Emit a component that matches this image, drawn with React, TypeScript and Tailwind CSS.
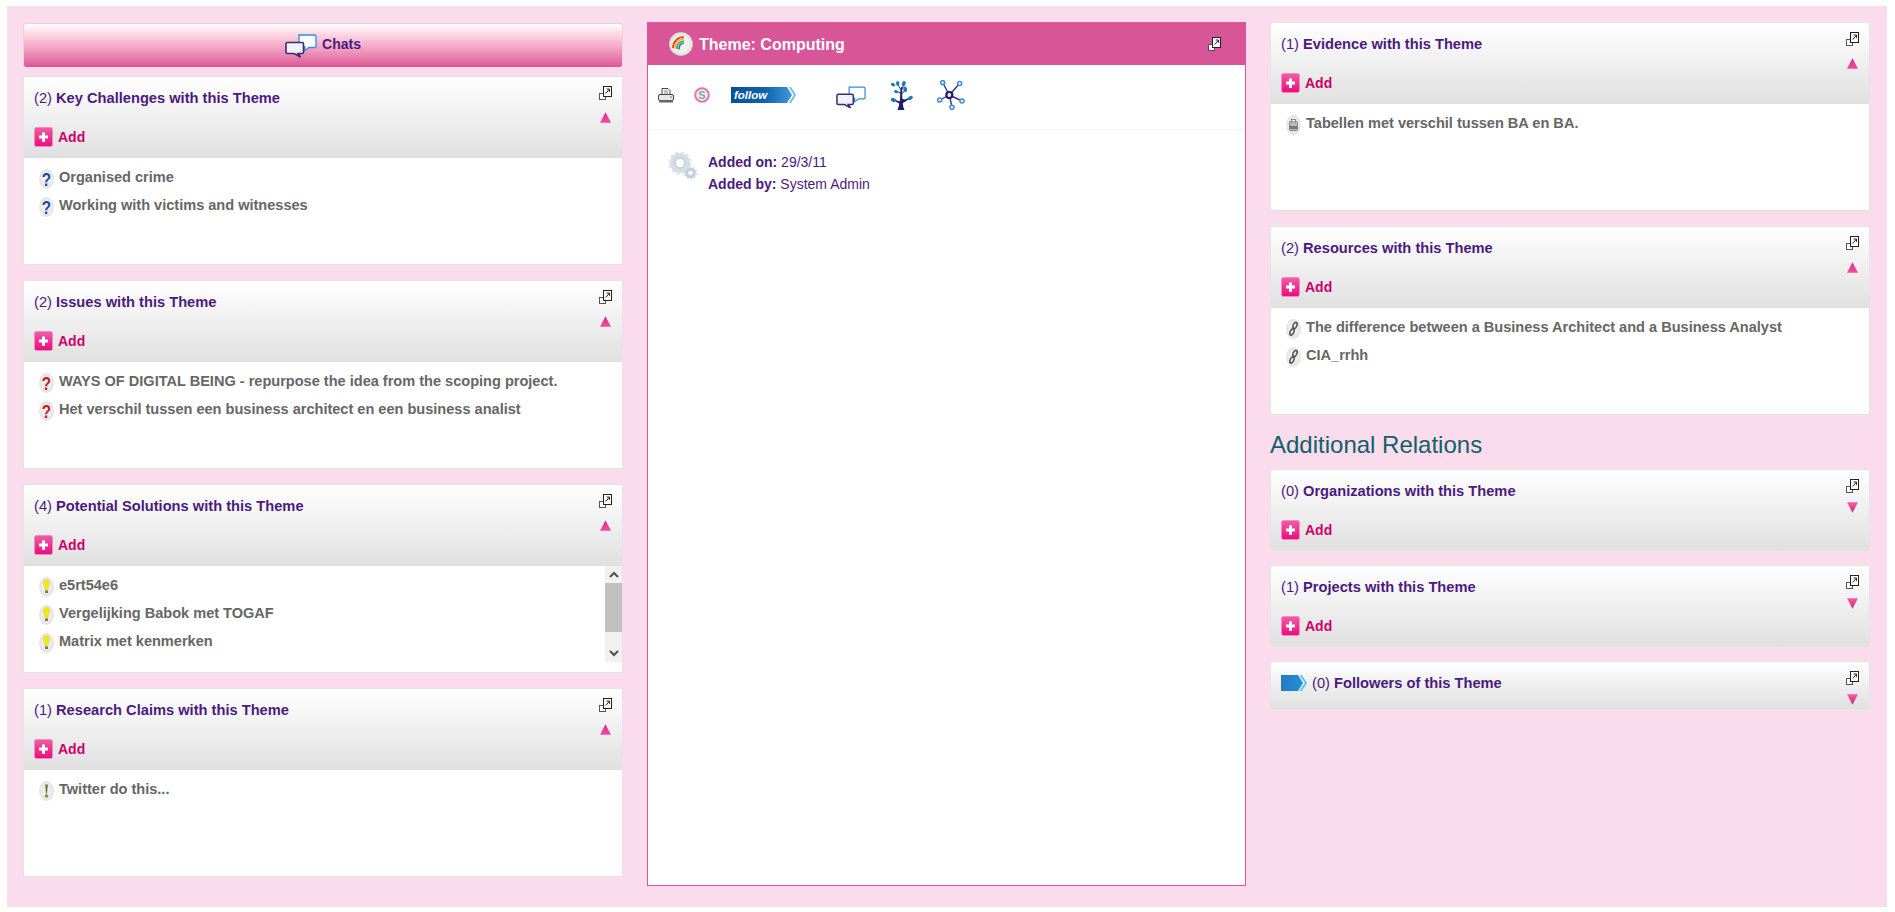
import React from "react";

const Expand = () => (
  <svg width="13" height="14" viewBox="0 0 13 14" className="block">
    <rect x="0.5" y="7.5" width="6" height="6" fill="#fff" stroke="#555" />
    <rect x="4.5" y="0.5" width="8" height="10" fill="#fff" stroke="#222" />
    <path d="M6.8 7.5 L10.2 3.4 M7.6 3 H10.5 V5.8" fill="none" stroke="#222" strokeWidth="1" />
  </svg>
);

const Tri = ({ down }: { down?: boolean }) => (
  <svg width="11" height="11" viewBox="0 0 11 11" className="block">
    <defs>
      <linearGradient id={down ? "td" : "tu"} x1="0" y1="0" x2="0" y2="1">
        <stop offset="0" stopColor={down ? "#f4609f" : "#d9288a"} />
        <stop offset="1" stopColor={down ? "#d81e85" : "#ef4f9c"} />
      </linearGradient>
    </defs>
    <path d={down ? "M0 0.3 H11 L5.5 10.8 Z" : "M5.5 0.2 L11 10.7 H0 Z"} fill={`url(#${down ? "td" : "tu"})`} />
  </svg>
);

const AddBtn = () => (
  <div className="flex items-center h-5 gap-[5px]">
    <svg width="19" height="20" viewBox="0 0 19 20" className="block shrink-0">
      <defs>
        <linearGradient id="addg" x1="0" y1="0" x2="0" y2="1">
          <stop offset="0" stopColor="#ee5fa6" />
          <stop offset="1" stopColor="#ec0a80" />
        </linearGradient>
      </defs>
      <rect x="0.5" y="0.5" width="18" height="19" rx="2" fill="url(#addg)" stroke="#f08cc0" />
      <path d="M9.5 5.5 V15 M5 10 H14" stroke="#fff" strokeWidth="3" />
    </svg>
    <span className="text-[#cc0066] font-bold text-[14px] leading-none">Add</span>
  </div>
);

const Oval = ({ children }: { children?: React.ReactNode }) => (
  <svg width="15" height="20" viewBox="0 0 15 20" className="block shrink-0">
    <defs>
      <radialGradient id="ov" cx="0.5" cy="0.5" r="0.6">
        <stop offset="0" stopColor="#f4f4f4" />
        <stop offset="0.7" stopColor="#e8e8e8" />
        <stop offset="1" stopColor="#d2d2d2" />
      </radialGradient>
    </defs>
    <ellipse cx="7.5" cy="10" rx="7.3" ry="9.9" fill="url(#ov)" />
    {children}
  </svg>
);

const Mark = ({ kind }: { kind: string }) => {
  if (kind === "q" || kind === "i")
    return (
      <Oval>
        <text transform="translate(7.5 16.8) scale(0.95 1.2)" textAnchor="middle" fontFamily="'Liberation Sans',sans-serif" fontWeight="700" fontSize="16" fill={kind === "q" ? "#1a4a9c" : "#c8181f"}>?</text>
      </Oval>
    );
  if (kind === "s")
    return (
      <Oval>
        <path d="M7.5 2.5 C10.5 2.5 11 5.5 10.3 7.5 C9.8 9 9 10 9 13 H6 C6 10 5.2 9 4.7 7.5 C4 5.5 4.5 2.5 7.5 2.5 Z" fill="#f3e81e" stroke="#d8c810" strokeWidth="0.4" />
        <rect x="6" y="13.5" width="3" height="2.5" fill="#777" />
      </Oval>
    );
  if (kind === "c")
    return (
      <Oval>
        <path d="M6.2 3.5 H8.8 L8 12.5 H7 Z" fill="#5f6f2a" />
        <circle cx="7.5" cy="15" r="1.8" fill="#7d9a3a" />
      </Oval>
    );
  if (kind === "e")
    return (
      <Oval>
        <rect x="3.5" y="6.5" width="8" height="9" rx="1" fill="#bdbdbd" stroke="#666" strokeWidth="0.7" />
        <rect x="5.5" y="4.5" width="4" height="2.5" fill="#eee" stroke="#666" strokeWidth="0.7" />
        <rect x="3.5" y="11" width="8" height="3" fill="#777" />
      </Oval>
    );
  return (
    <Oval>
      <g fill="none" stroke="#555" strokeWidth="1.6">
        <ellipse cx="9" cy="6.5" rx="1.8" ry="3.2" transform="rotate(25 9 6.5)" />
        <ellipse cx="6" cy="13" rx="1.8" ry="3.2" transform="rotate(25 6 13)" />
      </g>
    </Oval>
  );
};

const ChatIcon = ({ w = 32, h = 24 }: { w?: number; h?: number }) => (
  <svg width={w} height={h} viewBox="0 0 32 24" className="block">
    <path d="M14 1 H29.5 Q31 1 31 2.5 V12 Q31 13.5 29.5 13.5 H24 L19 17 L20 13 H14 Z" fill="#fff" stroke="#2f8ed8" strokeWidth="1.3" />
    <path d="M2.5 8.5 H17 Q18.5 8.5 18.5 10 V18 Q18.5 19.5 17 19.5 H13 L15.5 23 L9 19.5 H2.5 Q1 19.5 1 18 V10 Q1 8.5 2.5 8.5 Z" fill="#f3f2f8" stroke="#3a2a78" strokeWidth="1.6" />
  </svg>
);

const TreeIcon = () => (
  <svg width="22" height="29" viewBox="0 0 22 29" className="block">
    <path d="M6.5 29 C8.5 24 9.2 19 9.2 14 C9.2 11 9.5 9 10 6 L11.3 6 C11.2 10 11 14 11.4 18 C13.5 19 15.5 18.5 18 16.5 L18.6 17.3 C16 20 13.5 21 11.8 22 C12 25 12.5 27 13.5 29 Z" fill="#1b1a6e" />
    <path d="M9.3 23 C7.5 22 5 21 3 19 L3.6 18.2 C5.5 19.5 7.5 20.2 9.4 20.5 Z" fill="#1b1a6e" />
    <path d="M10 12 L5.5 10.5 M10 9 L6.5 3 M10.5 9 L13.5 2.5 M10.8 13 L14 9" stroke="#1b1a6e" strokeWidth="0.9" fill="none" />
    <g fill="#1a78bd">
      <ellipse cx="2" cy="3.6" rx="2.2" ry="1.6" transform="rotate(25 2 3.6)" />
      <ellipse cx="6.7" cy="2.4" rx="1.6" ry="2.4" />
      <ellipse cx="12.8" cy="2.6" rx="1.8" ry="2.6" transform="rotate(20 12.8 2.6)" />
      <ellipse cx="14.2" cy="8.2" rx="1.9" ry="2.8" transform="rotate(-15 14.2 8.2)" />
      <ellipse cx="5" cy="10.6" rx="2" ry="1.5" transform="rotate(25 5 10.6)" />
      <ellipse cx="2.4" cy="19" rx="2.6" ry="1.9" transform="rotate(25 2.4 19)" />
      <ellipse cx="19.3" cy="17" rx="2.7" ry="1.8" transform="rotate(-30 19.3 17)" />
    </g>
  </svg>
);

const NetIcon = () => (
  <svg width="28" height="30" viewBox="0 0 28 30" className="block">
    <path d="M12.3 15 L5.7 2.5 M12.3 15 L22.7 3.5 M12.3 15 L2.7 20 M12.3 15 L25 21 M12.3 15 L15 27" stroke="#3e2f80" strokeWidth="1.4" />
    <g fill="#fff" stroke="#3c8fd6" strokeWidth="1.6">
      <circle cx="5.7" cy="2.6" r="2" />
      <circle cx="22.7" cy="3.5" r="2" />
      <circle cx="2.7" cy="20" r="2" />
      <circle cx="25" cy="21" r="2" />
      <circle cx="15" cy="27.3" r="2" />
    </g>
    <circle cx="12.3" cy="15" r="3" fill="#fff" stroke="#1f1a6b" strokeWidth="2.2" />
  </svg>
);

const Printer = () => (
  <svg width="16" height="15" viewBox="0 0 16 15" className="block">
    <path d="M4 0.5 H10 L12 2.5 V7 H4 Z" fill="#fff" stroke="#444" />
    <path d="M6 3 H10 M6 5 H10" stroke="#888" />
    <rect x="0.5" y="6.5" width="15" height="6" rx="1.5" fill="#e8e8e8" stroke="#444" />
    <rect x="1" y="12" width="14" height="2.5" fill="#666" />
    <rect x="12" y="8.5" width="2" height="1" fill="#2fb34a" />
  </svg>
);

const SIcon = () => (
  <svg width="16" height="16" viewBox="0 0 16 16" className="block">
    <circle cx="8" cy="8" r="6.8" fill="#eef3f2" stroke="#ef6fae" strokeWidth="2" />
    <text x="8" y="12" textAnchor="middle" fontFamily="'Liberation Sans',sans-serif" fontWeight="700" fontSize="11" fill="#7fa5a0">S</text>
  </svg>
);

const Follow = () => (
  <svg width="65" height="16" viewBox="0 0 65 16" className="block">
    <defs>
      <linearGradient id="fg" x1="0" y1="0" x2="1" y2="0">
        <stop offset="0" stopColor="#0a4f9a" />
        <stop offset="0.55" stopColor="#0e62ad" />
        <stop offset="1" stopColor="#3f9ad9" />
      </linearGradient>
    </defs>
    <path d="M0 0 H56 L61 8 L56 16 H0 Z" fill="url(#fg)" />
    <path d="M59 0 L64 8 L59 16" fill="none" stroke="#6cb6e8" strokeWidth="1.8" />
    <text x="3" y="12" fontFamily="'Liberation Sans',sans-serif" fontWeight="700" fontStyle="italic" fontSize="11.5" fill="#fff">follow</text>
  </svg>
);

const Gears = () => (
  <svg width="29" height="28" viewBox="0 0 29 28" className="block">
    <circle cx="12" cy="11" r="7.6" fill="none" stroke="#d3dee8" strokeWidth="5" />
    <circle cx="12" cy="11" r="10.6" fill="none" stroke="#dde6ee" strokeWidth="2.4" strokeDasharray="3 2.6" />
    <circle cx="12" cy="11" r="5" fill="#fff" stroke="#9fb0bf" strokeWidth="0.8" />
    <circle cx="22.5" cy="21" r="3.8" fill="#fff" stroke="#c0cfdc" strokeWidth="3" />
    <circle cx="22.5" cy="21" r="5.8" fill="none" stroke="#cfdbe5" strokeWidth="1.6" strokeDasharray="2 1.6" />
  </svg>
);

const ThemeIcon = () => (
  <svg width="24" height="24" viewBox="0 0 24 24" className="block">
    <circle cx="12" cy="12" r="11.8" fill="#e6e6e0" />
    <circle cx="12" cy="12" r="9" fill="#f1f1ec" />
    <g fill="none" strokeWidth="1.7">
      <path d="M4 16 C4 9.5 8.5 5 15 5" stroke="#e8392f" />
      <path d="M6 16.5 C6 11 9.5 7 15 7" stroke="#f5b324" />
      <path d="M8 17 C8 12.5 10.5 9 15 9" stroke="#3eac4e" />
      <path d="M10 17.5 C10 14 11.5 11 15 11" stroke="#2b79c9" />
    </g>
  </svg>
);

const FollowersArrow = () => (
  <svg width="26" height="16" viewBox="0 0 26 16" className="block shrink-0">
    <defs>
      <linearGradient id="fa" x1="0" y1="0" x2="1" y2="0">
        <stop offset="0" stopColor="#2b79c0" />
        <stop offset="1" stopColor="#1b90dc" />
      </linearGradient>
    </defs>
    <path d="M0 0 H17 L22 8 L17 16 H0 Z" fill="url(#fa)" />
    <path d="M19.5 0 L25 8 L19.5 16" fill="none" stroke="#58c0f0" strokeWidth="1.8" />
  </svg>
);

const Title = ({ count, name }: { count: number; name: string }) => (
  <div className="text-[14.67px] leading-5 text-[#4b1a7e] whitespace-nowrap">
    ({count}) <span className="font-bold">{name}</span>
  </div>
);

type Item = { k: string; t: string };

const Card = ({
  count,
  name,
  items,
  collapsed,
  add = true,
  scroll,
  arrow,
}: {
  count: number;
  name: string;
  items?: Item[];
  collapsed?: boolean;
  add?: boolean;
  scroll?: boolean;
  arrow?: boolean;
}) => (
  <section className={`border border-[#e6e3e6] bg-white ${collapsed ? "" : "h-[189px]"}`}>
    <div className={`bg-gradient-to-b from-white to-[#e0e0e0] flex justify-between pl-[10px] pr-[10px] ${collapsed ? (add ? "h-[80px]" : "h-[47px]") : "h-[81px]"}`}>
      <div className="flex flex-col pt-[11px]">
        <div className="flex items-center h-5 gap-[5px]">
          {arrow && <FollowersArrow />}
          <Title count={count} name={name} />
        </div>
        {add && (
          <div className="mt-[19px]">
            <AddBtn />
          </div>
        )}
      </div>
      <div className={`flex flex-col items-center pt-[9px] ${collapsed ? "gap-[9px]" : "gap-[12px]"}`}>
        <Expand />
        <Tri down={collapsed} />
      </div>
    </div>
    {items && (
      <div className="flex h-[97px]">
        <ul className="flex-1 pt-[9px] pl-[15px] flex flex-col gap-2">
          {items.map((it) => (
            <li key={it.t} className="flex items-start gap-[5px] h-5">
              <div className="pt-[2px]">
                <Mark kind={it.k} />
              </div>
              <span className="text-[14.55px] font-bold text-[#666666] leading-5 whitespace-nowrap">{it.t}</span>
            </li>
          ))}
        </ul>
        {scroll && (
          <div className="w-[17px] h-[96px] bg-[#f1f1f1] flex flex-col shrink-0">
            <div className="h-[17px] flex items-center justify-center">
              <svg width="10" height="7" viewBox="0 0 10 7"><path d="M1 6 L5 2 L9 6" fill="none" stroke="#505050" strokeWidth="2" /></svg>
            </div>
            <div className="h-[49px] bg-[#c1c1c1]" />
            <div className="flex-1" />
            <div className="h-[17px] flex items-center justify-center">
              <svg width="10" height="7" viewBox="0 0 10 7"><path d="M1 1 L5 5 L9 1" fill="none" stroke="#505050" strokeWidth="2" /></svg>
            </div>
          </div>
        )}
      </div>
    )}
  </section>
);

export default function App() {
  return (
    <div className="bg-white pt-[6px] pb-[5px] pl-[7px] pr-2 font-['Liberation_Sans',Arial,sans-serif]">
      <div className="bg-[#fbdcec] h-[901px] pl-[16px] pr-[17px] pt-[16px] flex gap-[24px]">
        <div className="w-[600px] shrink-0 pt-px flex flex-col">
          <div className="h-[44px] rounded-[3px] border border-[#f0d0e0] border-b-0 bg-gradient-to-b from-white to-[#dc5597] flex items-center justify-center gap-[5px] mb-[9px]">
            <ChatIcon />
            <span className="text-[14px] font-bold text-[#4b1a7e] -mt-[3px]">Chats</span>
          </div>
          <div className="flex flex-col gap-[15px]">
            <Card count={2} name="Key Challenges with this Theme" items={[{ k: "q", t: "Organised crime" }, { k: "q", t: "Working with victims and witnesses" }]} />
            <Card count={2} name="Issues with this Theme" items={[{ k: "i", t: "WAYS OF DIGITAL BEING - repurpose the idea from the scoping project." }, { k: "i", t: "Het verschil tussen een business architect en een business analist" }]} />
            <Card count={4} name="Potential Solutions with this Theme" scroll items={[{ k: "s", t: "e5rt54e6" }, { k: "s", t: "Vergelijking Babok met TOGAF" }, { k: "s", t: "Matrix met kenmerken" }]} />
            <Card count={1} name="Research Claims with this Theme" items={[{ k: "c", t: "Twitter do this..." }]} />
          </div>
        </div>

        <div className="w-[599px] shrink-0 h-[864px] bg-white border border-[#d9569a] flex flex-col">
          <div className="h-[42px] bg-[#d85598] flex items-center justify-between pl-[21px] pr-[24px] shrink-0">
            <div className="flex items-center gap-[6px]">
              <ThemeIcon />
              <span className="text-white font-bold text-[16px] leading-none mt-[1px]">Theme: Computing</span>
            </div>
            <Expand />
          </div>
          <div className="h-[65px] border-b border-[#f5f5f5] flex items-start pl-[10px] shrink-0">
            <div className="pt-[23px]"><Printer /></div>
            <div className="pt-[22px] ml-5"><SIcon /></div>
            <div className="pt-[22px] ml-[21px]"><Follow /></div>
            <div className="pt-[20px] ml-10"><ChatIcon w={30} h={25} /></div>
            <div className="pt-[16px] ml-[25px]"><TreeIcon /></div>
            <div className="pt-[15px] ml-6"><NetIcon /></div>
          </div>
          <div className="flex pt-[21px] pl-[20px] gap-[11px]">
            <div className="pt-px"><Gears /></div>
            <div className="text-[14px] leading-[22px] text-[#4b1a7e]">
              <div><span className="font-bold">Added on:</span> 29/3/11</div>
              <div><span className="font-bold">Added by:</span> System Admin</div>
            </div>
          </div>
        </div>

        <div className="w-[600px] shrink-0 flex flex-col">
          <div className="flex flex-col gap-[15px]">
            <Card count={1} name="Evidence with this Theme" items={[{ k: "e", t: "Tabellen met verschil tussen BA en BA." }]} />
            <Card count={2} name="Resources with this Theme" items={[{ k: "r", t: "The difference between a Business Architect and a Business Analyst" }, { k: "r", t: "CIA_rrhh" }]} />
          </div>
          <h2 className="text-[24px] leading-[30px] text-[#0f6068] mt-[15px] mb-[9px]">Additional Relations</h2>
          <div className="flex flex-col gap-[14px]">
            <Card count={0} name="Organizations with this Theme" collapsed />
            <Card count={1} name="Projects with this Theme" collapsed />
            <Card count={0} name="Followers of this Theme" collapsed add={false} arrow />
          </div>
        </div>
      </div>
    </div>
  );
}
